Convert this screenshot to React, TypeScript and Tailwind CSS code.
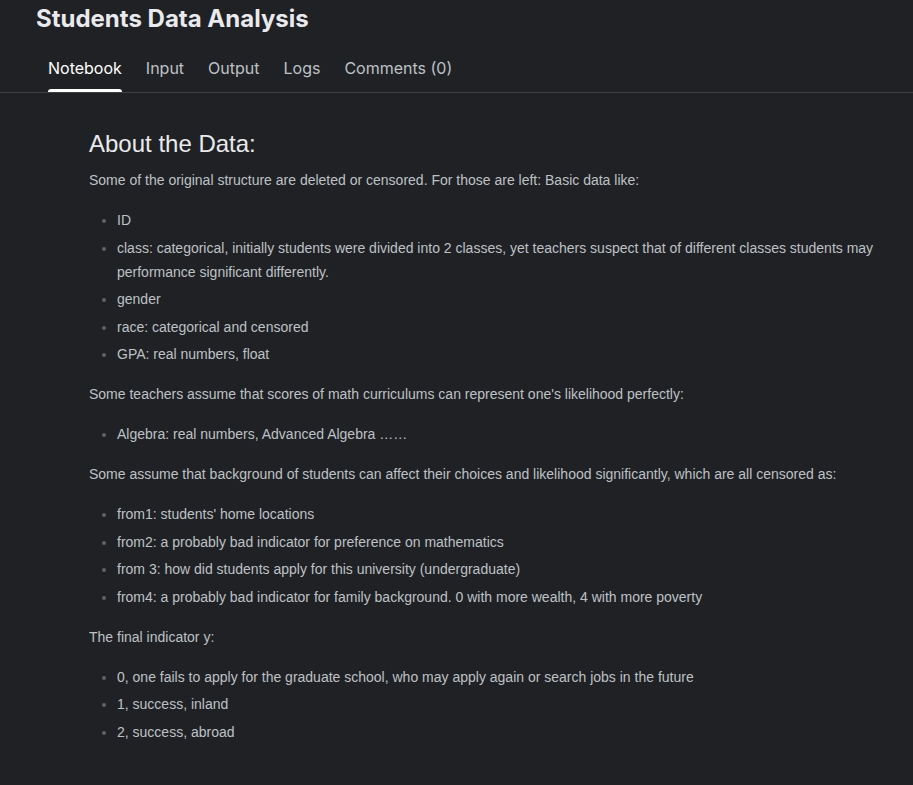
const tabs = ["Notebook", "Input", "Output", "Logs", "Comments (0)"];

function Bullets({ items }: { items: string[] }) {
  return (
    <ul className="mt-4 list-disc pl-7 marker:text-[#5f6368]">
      {items.map((item) => (
        <li key={item} className="mb-[3.5px] leading-6">
          {item}
        </li>
      ))}
    </ul>
  );
}

export default function App() {
  return (
    <div className="min-h-[785px] bg-[#202124] font-['Liberation_Sans',Arial,sans-serif] text-[#bdc1c6]">
      <header className="font-['Inter',sans-serif]">
        <h1 className="px-9 pt-[3px] text-2xl leading-8 font-bold text-[#e8eaed]">
          Students Data Analysis
        </h1>
        <nav className="mt-[21px] flex gap-6 border-b border-[#3c4043] px-12">
          {tabs.map((tab, i) => (
            <div key={tab} className="flex flex-col">
              <span
                className={
                  i === 0
                    ? "text-base leading-6 text-white"
                    : "text-base leading-6 text-[#bdc1c6]"
                }
              >
                {tab}
              </span>
              <span
                className={
                  i === 0
                    ? "mt-[9px] h-[3px] rounded-t-sm bg-white"
                    : "mt-[9px] h-[3px]"
                }
              />
            </div>
          ))}
        </nav>
      </header>

      <main className="pt-[35px] pr-6 pl-[89px] pb-10 text-sm">
        <h2 className="text-2xl leading-8 text-[#e8eaed]">About the Data:</h2>
        <p className="mt-2 leading-6">
          Some of the original structure are deleted or censored. For those are left: Basic data like:
        </p>
        <Bullets
          items={[
            "ID",
            "class: categorical, initially students were divided into 2 classes, yet teachers suspect that of different classes students may performance significant differently.",
            "gender",
            "race: categorical and censored",
            "GPA: real numbers, float",
          ]}
        />
        <p className="mt-4 leading-6">
          Some teachers assume that scores of math curriculums can represent one's likelihood perfectly:
        </p>
        <Bullets items={["Algebra: real numbers, Advanced Algebra ……"]} />
        <p className="mt-4 leading-6">
          Some assume that background of students can affect their choices and likelihood significantly, which are all censored as:
        </p>
        <Bullets
          items={[
            "from1: students' home locations",
            "from2: a probably bad indicator for preference on mathematics",
            "from 3: how did students apply for this university (undergraduate)",
            "from4: a probably bad indicator for family background. 0 with more wealth, 4 with more poverty",
          ]}
        />
        <p className="mt-4 leading-6">The final indicator y:</p>
        <Bullets
          items={[
            "0, one fails to apply for the graduate school, who may apply again or search jobs in the future",
            "1, success, inland",
            "2, success, abroad",
          ]}
        />
      </main>
    </div>
  );
}
